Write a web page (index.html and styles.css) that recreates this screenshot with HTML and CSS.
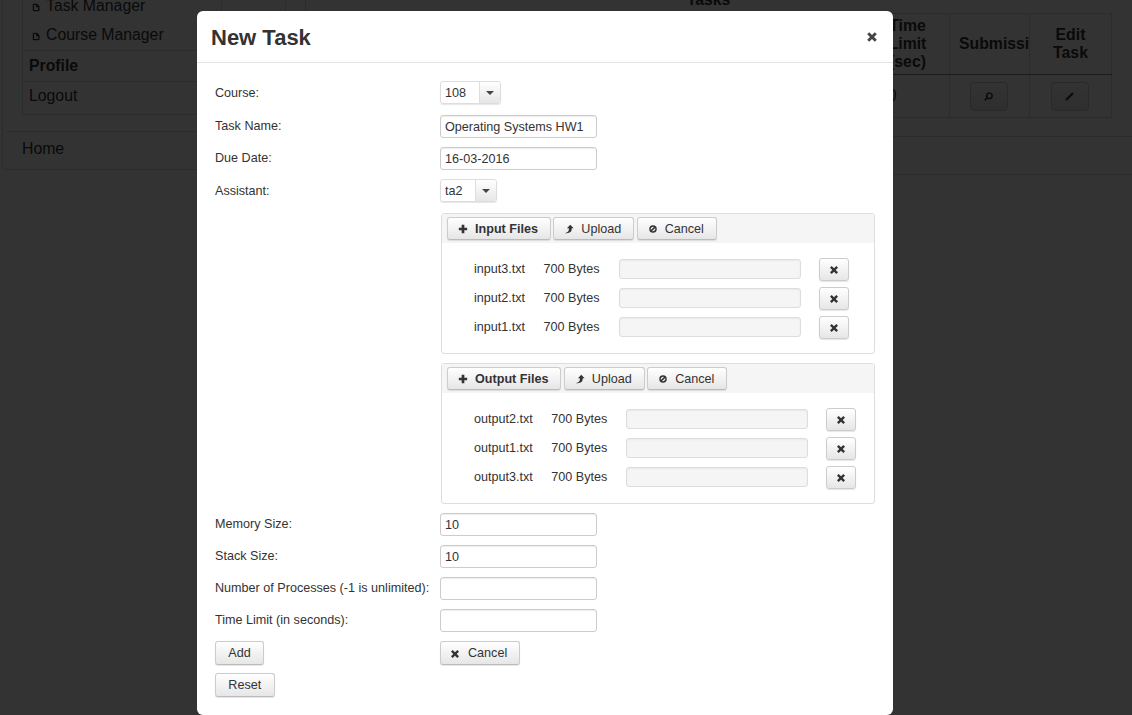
FILE: index.html
```html
<!DOCTYPE html>
<html lang="en">
  <head>
    <meta charset="UTF-8" />
    <title>New Task</title>
    <link rel="stylesheet" href="styles.css">
  </head>
  <body>
    <!-- icon set -->
    <svg class="icon-defs" xmlns="http://www.w3.org/2000/svg">
      <symbol id="i-remove" viewBox="0 0 12 12"><path d="M1.200 3.200 3.200 1.200 6 4 8.800 1.200 10.800 3.200 8 6 10.800 8.800 8.800 10.800 6 8 3.200 10.800 1.200 8.800 4 6z"/></symbol>
      <symbol id="i-plus" viewBox="0 0 12 12"><path d="M4.400 1h3.200v3.400H11v3.200H7.600V11H4.400V7.600H1V4.400h3.400z"/></symbol>
      <symbol id="i-ban" viewBox="0 0 12 12"><path fill-rule="evenodd" d="M6 1.500a4.500 4.500 0 1 1 0 9 4.500 4.500 0 0 1 0-9zM3.300 7.200l3.900-3.700A3 3 0 0 0 3.300 7.200zm1.500 1.300 3.900-3.700a3 3 0 0 1-3.900 3.700z"/></symbol>
      <symbol id="i-upload" viewBox="0 0 12 12"><path d="M7.500 1 11.500 5.200H9.200v1.300C9.200 9.200 6.500 11 1 11 4.500 10 5.800 8.600 5.800 6.500V5.200H3.500z"/></symbol>
      <symbol id="i-caret" viewBox="0 0 8 4"><path d="M0 0h8L4 4z"/></symbol>
      <symbol id="i-search" viewBox="0 0 12 12"><path fill-rule="evenodd" d="M7 1.500a3.800 3.800 0 1 1-2.200 6.900L2.400 10.800 1.200 9.600 3.600 7.200A3.800 3.800 0 0 1 7 1.500zm0 1.600a2.200 2.200 0 1 0 0 4.400 2.200 2.200 0 0 0 0-4.400z"/></symbol>
      <symbol id="i-pencil" viewBox="0 0 12 12"><path d="M9 1.300 10.700 3 3.900 9.800 1.400 10.600 2.200 8.100z"/></symbol>
      <symbol id="i-file" viewBox="0 0 12 12"><path fill-rule="evenodd" d="M2.500 1h4.300L10 4.200v5.300A1.500 1.500 0 0 1 8.500 11h-6A1.500 1.500 0 0 1 1 9.500v-7A1.500 1.500 0 0 1 2.500 1zm.2 1.700v6.600h5.600V5.500H5.500V2.700z"/></symbol>
    </svg>

    <!-- page behind the dialog -->
    <div class="page">
      <div class="side">
        <div class="side-list">
          <div class="side-item sub"><svg class="icon"><use href="#i-file"/></svg>Task Manager</div>
          <div class="side-item sub"><svg class="icon"><use href="#i-file"/></svg>Course Manager</div>
          <div class="side-item head">Profile</div>
          <div class="side-item last">Logout</div>
        </div>
        <div class="side-foot">Home</div>
      </div>
      <div class="main">
        <div class="main-title">Tasks</div>
        <table class="tasks">
          <colgroup>
            <col class="col-rest"><col class="col-time"><col class="col-sub"><col class="col-edit">
          </colgroup>
          <thead>
            <tr>
              <th></th>
              <th>Time Limit (sec)</th>
              <th><div class="clip">Submissi</div></th>
              <th>Edit Task</th>
            </tr>
          </thead>
          <tbody>
            <tr>
              <td></td>
              <td class="num">10</td>
              <td><span class="btn-dim"><svg class="icon"><use href="#i-search"/></svg></span></td>
              <td><span class="btn-dim"><svg class="icon"><use href="#i-pencil"/></svg></span></td>
            </tr>
          </tbody>
        </table>
        <div class="main-foot"></div>
      </div>
    </div>

    <div class="backdrop"></div>

    <div class="modal">
      <div class="modal-header">
        <h3>New Task</h3>
        <svg class="icon close"><use href="#i-remove"/></svg>
      </div>
      <form class="modal-body">
        <div class="row wide">
          <label>Course:</label>
          <div class="select"><span class="select-value course">108</span><span class="select-arrow"><svg class="caret"><use href="#i-caret"/></svg></span></div>
        </div>
        <div class="row">
          <label>Task Name:</label>
          <input type="text" value="Operating Systems HW1">
        </div>
        <div class="row">
          <label>Due Date:</label>
          <input type="text" value="16-03-2016">
        </div>
        <div class="row wide">
          <label>Assistant:</label>
          <div class="select"><span class="select-value assistant">ta2</span><span class="select-arrow"><svg class="caret"><use href="#i-caret"/></svg></span></div>
        </div>

        <div class="uploader">
          <div class="uploader-bar">
            <button type="button" class="btn strong"><svg class="icon"><use href="#i-plus"/></svg>Input Files</button>
            <button type="button" class="btn"><svg class="icon"><use href="#i-upload"/></svg>Upload</button>
            <button type="button" class="btn"><svg class="icon"><use href="#i-ban"/></svg>Cancel</button>
          </div>
          <div class="file-list">
            <span>input3.txt</span><span>700 Bytes</span><div class="progress"></div><button type="button" class="btn-x"><svg class="icon"><use href="#i-remove"/></svg></button>
            <span>input2.txt</span><span>700 Bytes</span><div class="progress"></div><button type="button" class="btn-x"><svg class="icon"><use href="#i-remove"/></svg></button>
            <span>input1.txt</span><span>700 Bytes</span><div class="progress"></div><button type="button" class="btn-x"><svg class="icon"><use href="#i-remove"/></svg></button>
          </div>
        </div>

        <div class="uploader">
          <div class="uploader-bar">
            <button type="button" class="btn strong"><svg class="icon"><use href="#i-plus"/></svg>Output Files</button>
            <button type="button" class="btn"><svg class="icon"><use href="#i-upload"/></svg>Upload</button>
            <button type="button" class="btn"><svg class="icon"><use href="#i-ban"/></svg>Cancel</button>
          </div>
          <div class="file-list">
            <span>output2.txt</span><span>700 Bytes</span><div class="progress"></div><button type="button" class="btn-x"><svg class="icon"><use href="#i-remove"/></svg></button>
            <span>output1.txt</span><span>700 Bytes</span><div class="progress"></div><button type="button" class="btn-x"><svg class="icon"><use href="#i-remove"/></svg></button>
            <span>output3.txt</span><span>700 Bytes</span><div class="progress"></div><button type="button" class="btn-x"><svg class="icon"><use href="#i-remove"/></svg></button>
          </div>
        </div>

        <div class="row">
          <label>Memory Size:</label>
          <input type="text" value="10">
        </div>
        <div class="row">
          <label>Stack Size:</label>
          <input type="text" value="10">
        </div>
        <div class="row">
          <label>Number of Processes (-1 is unlimited):</label>
          <input type="text">
        </div>
        <div class="row">
          <label>Time Limit (in seconds):</label>
          <input type="text">
        </div>
        <div class="row actions">
          <div class="action-cell"><button type="button" class="btn plain">Add</button></div>
          <button type="button" class="btn plain with-icon"><svg class="icon"><use href="#i-remove"/></svg>Cancel</button>
        </div>
        <div class="row actions last">
          <div class="action-cell"><button type="button" class="btn plain">Reset</button></div>
        </div>
      </form>
    </div>
  </body>
</html>
```

FILE: styles.css
```css
* {
  box-sizing: border-box;
}
html, body {
  margin: 0;
  height: 715px;
  overflow: hidden;
}
body {
  background-color: #fff;
  color: #333;
  font-family: "Liberation Sans", Arial, sans-serif;
  font-size: 12.6px;
  position: relative;
}
.icon-defs {
  display: none;
}
.icon {
  width: 12px;
  height: 12px;
  fill: currentColor;
  flex: none;
}

/* page behind the dialog */
.page {
  display: flex;
  align-items: flex-start;
  margin-top: -40px;
  padding-left: 2px;
  font-size: 15.8px;
}
.side {
  width: 284px;
  border: 1px solid #ddd;
  border-radius: 4px;
}
.side-list {
  width: 200px;
  margin: 31px 0 16px 19px;
  border: 1px solid #ddd;
  border-top: 0;
  border-radius: 0 0 4px 4px;
}
.side-item {
  display: flex;
  align-items: center;
  padding-left: 6px;
  height: 30px;
  border-top: 1px solid #ddd;
}
.side-item.sub {
  height: 28px;
  border-top: 0;
  padding-left: 9px;
  gap: 5px;
}
.side-item.sub .icon {
  width: 9px;
  height: 9px;
  margin-top: 3px;
}
.side-item.head {
  font-weight: bold;
  height: 31px;
}
.side-item.sub + .side-item.sub {
  height: 30px;
}
.side-item.last {
  height: 33px;
  padding-bottom: 4px;
}
.side-foot {
  margin-left: 3px;
  height: 38px;
  line-height: 34px;
  padding-left: 16px;
  border-top: 1px solid #ddd;
}
.main {
  flex: 1;
  margin-left: 19px;
  padding-top: 30px;
  border-left: 1px solid #ddd;
}
.main-title {
  font-weight: bold;
  text-align: center;
  line-height: 20px;
  margin-bottom: 3px;
  width: 805px;
}
.tasks {
  border-collapse: collapse;
  table-layout: fixed;
  width: 806px;
}
.col-time {
  width: 84px;
}
.col-sub {
  width: 80px;
}
.col-edit {
  width: 82px;
}
.tasks th, .tasks td {
  border: 1px solid #ddd;
  text-align: center;
}
.tasks th {
  height: 61px;
  border-bottom: 1px solid #888;
  line-height: 18px;
  padding: 0 8px;
}
.tasks td {
  height: 43px;
}
.tasks td.num {
  text-align: left;
  padding-left: 13px;
}
.tasks .clip {
  overflow: hidden;
  margin-right: -8px;
  padding-left: 1px;
  white-space: nowrap;
  text-align: left;
}
.btn-dim {
  display: inline-flex;
  align-items: center;
  justify-content: center;
  width: 38px;
  height: 29px;
  margin-left: -2px;
  vertical-align: middle;
  border: 1px solid #ccc;
  border-radius: 4px;
  background: linear-gradient(#fff, #e6e6e6);
}
.btn-dim .icon {
  width: 11px;
  height: 11px;
}
.main-foot {
  margin-top: 18px;
  height: 39px;
  border-top: 1px solid #ddd;
  border-bottom: 1px solid #ddd;
}
.backdrop {
  position: absolute;
  inset: 0;
  background-color: rgba(0, 0, 0, 0.8);
}

/* dialog */
.modal {
  position: absolute;
  top: 11px;
  left: 197px;
  width: 696px;
  height: 704px;
  background-color: #fff;
  border-radius: 6px;
}
.modal-header {
  display: flex;
  align-items: center;
  justify-content: space-between;
  height: 52px;
  padding: 0 15px 0 14px;
  border-bottom: 1px solid #e5e5e5;
}
.modal-header h3 {
  margin: 2px 0 0;
  font-size: 22px;
  font-weight: bold;
  line-height: 50px;
}
.close {
  width: 12px;
  height: 12px;
  color: #444;
}
.modal-body {
  padding: 18px 18px 0;
}
.row {
  display: flex;
  align-items: flex-start;
  margin-bottom: 9px;
}
.row.wide {
  margin-bottom: 11px;
}
.row label {
  width: 225px;
  padding-top: 4px;
  line-height: 15px;
  white-space: nowrap;
}
.row.wide label {
  padding-top: 5px;
}
.row input {
  width: 157px;
  height: 23px;
  padding: 1px 4px;
  border: 1px solid #ccc;
  border-radius: 3px;
  color: #333;
  font: inherit;
  box-shadow: inset 0 1px 1px rgba(0, 0, 0, 0.075);
}
.select {
  display: flex;
  height: 23px;
  border: 1px solid #ddd;
  border-radius: 3px;
  box-shadow: 0 1px 1px rgba(0, 0, 0, 0.1);
}
.select-value {
  line-height: 23px;
  padding-left: 4px;
}
.select-value.course {
  width: 38px;
}
.select-value.assistant {
  width: 34px;
}
.select-arrow {
  display: flex;
  align-items: center;
  justify-content: center;
  width: 21px;
  border-left: 1px solid #ddd;
  border-radius: 0 3px 3px 0;
  background: linear-gradient(#fff, #e6e6e6);
}
.caret {
  width: 8px;
  height: 4px;
  fill: #444;
}

/* file upload boxes */
.uploader {
  width: 434px;
  height: 141px;
  margin: 0 0 9px 226px;
  border: 1px solid #ddd;
  border-radius: 3px;
}
.uploader-bar {
  display: flex;
  gap: 2.4px;
  height: 29px;
  padding: 3px 5px 0;
  background-color: #f5f5f5;
}
.btn {
  display: inline-flex;
  align-items: center;
  height: 23px;
  padding: 0 12px 0 10px;
  border: 1px solid #ccc;
  border-bottom-color: #bbb;
  border-radius: 3px;
  background: linear-gradient(#fff, #e6e6e6);
  box-shadow: 0 1px 1px rgba(0, 0, 0, 0.1);
  color: #333;
  font: inherit;
  white-space: nowrap;
}
.btn .icon {
  width: 10px;
  height: 10px;
  margin-right: 7px;
}
.btn.strong {
  font-weight: bold;
}
.file-list {
  display: grid;
  grid-template-columns: max-content max-content 182.4px 30px;
  column-gap: 18.5px;
  row-gap: 6px;
  align-items: center;
  padding: 15px 0 0 32px;
}
.file-list span {
  margin-top: -2px;
}
.progress {
  align-self: start;
  height: 20px;
  margin: 1px 0 0 0.4px;
  border: 1px solid #ddd;
  border-radius: 3px;
  background-color: #f5f5f5;
  box-shadow: inset 0 1px 2px rgba(0, 0, 0, 0.05);
}
.btn-x {
  display: flex;
  align-items: center;
  justify-content: center;
  width: 30px;
  height: 23px;
  margin-left: -0.5px;
  padding: 0;
  border: 1px solid #ccc;
  border-radius: 3px;
  background: linear-gradient(#fff, #e6e6e6);
  box-shadow: 0 1px 1px rgba(0, 0, 0, 0.1);
  color: #333;
}
.btn-x .icon {
  width: 10px;
  height: 10px;
}
.row.actions {
  margin-bottom: 8px;
}
.action-cell {
  width: 225px;
}
.btn.plain {
  height: 24px;
  padding: 0 12.3px 1px;
}
.btn.with-icon {
  padding-left: 9px;
  padding-right: 12px;
}
.btn.with-icon .icon {
  margin-right: 8px;
  margin-top: 2px;
}
```
